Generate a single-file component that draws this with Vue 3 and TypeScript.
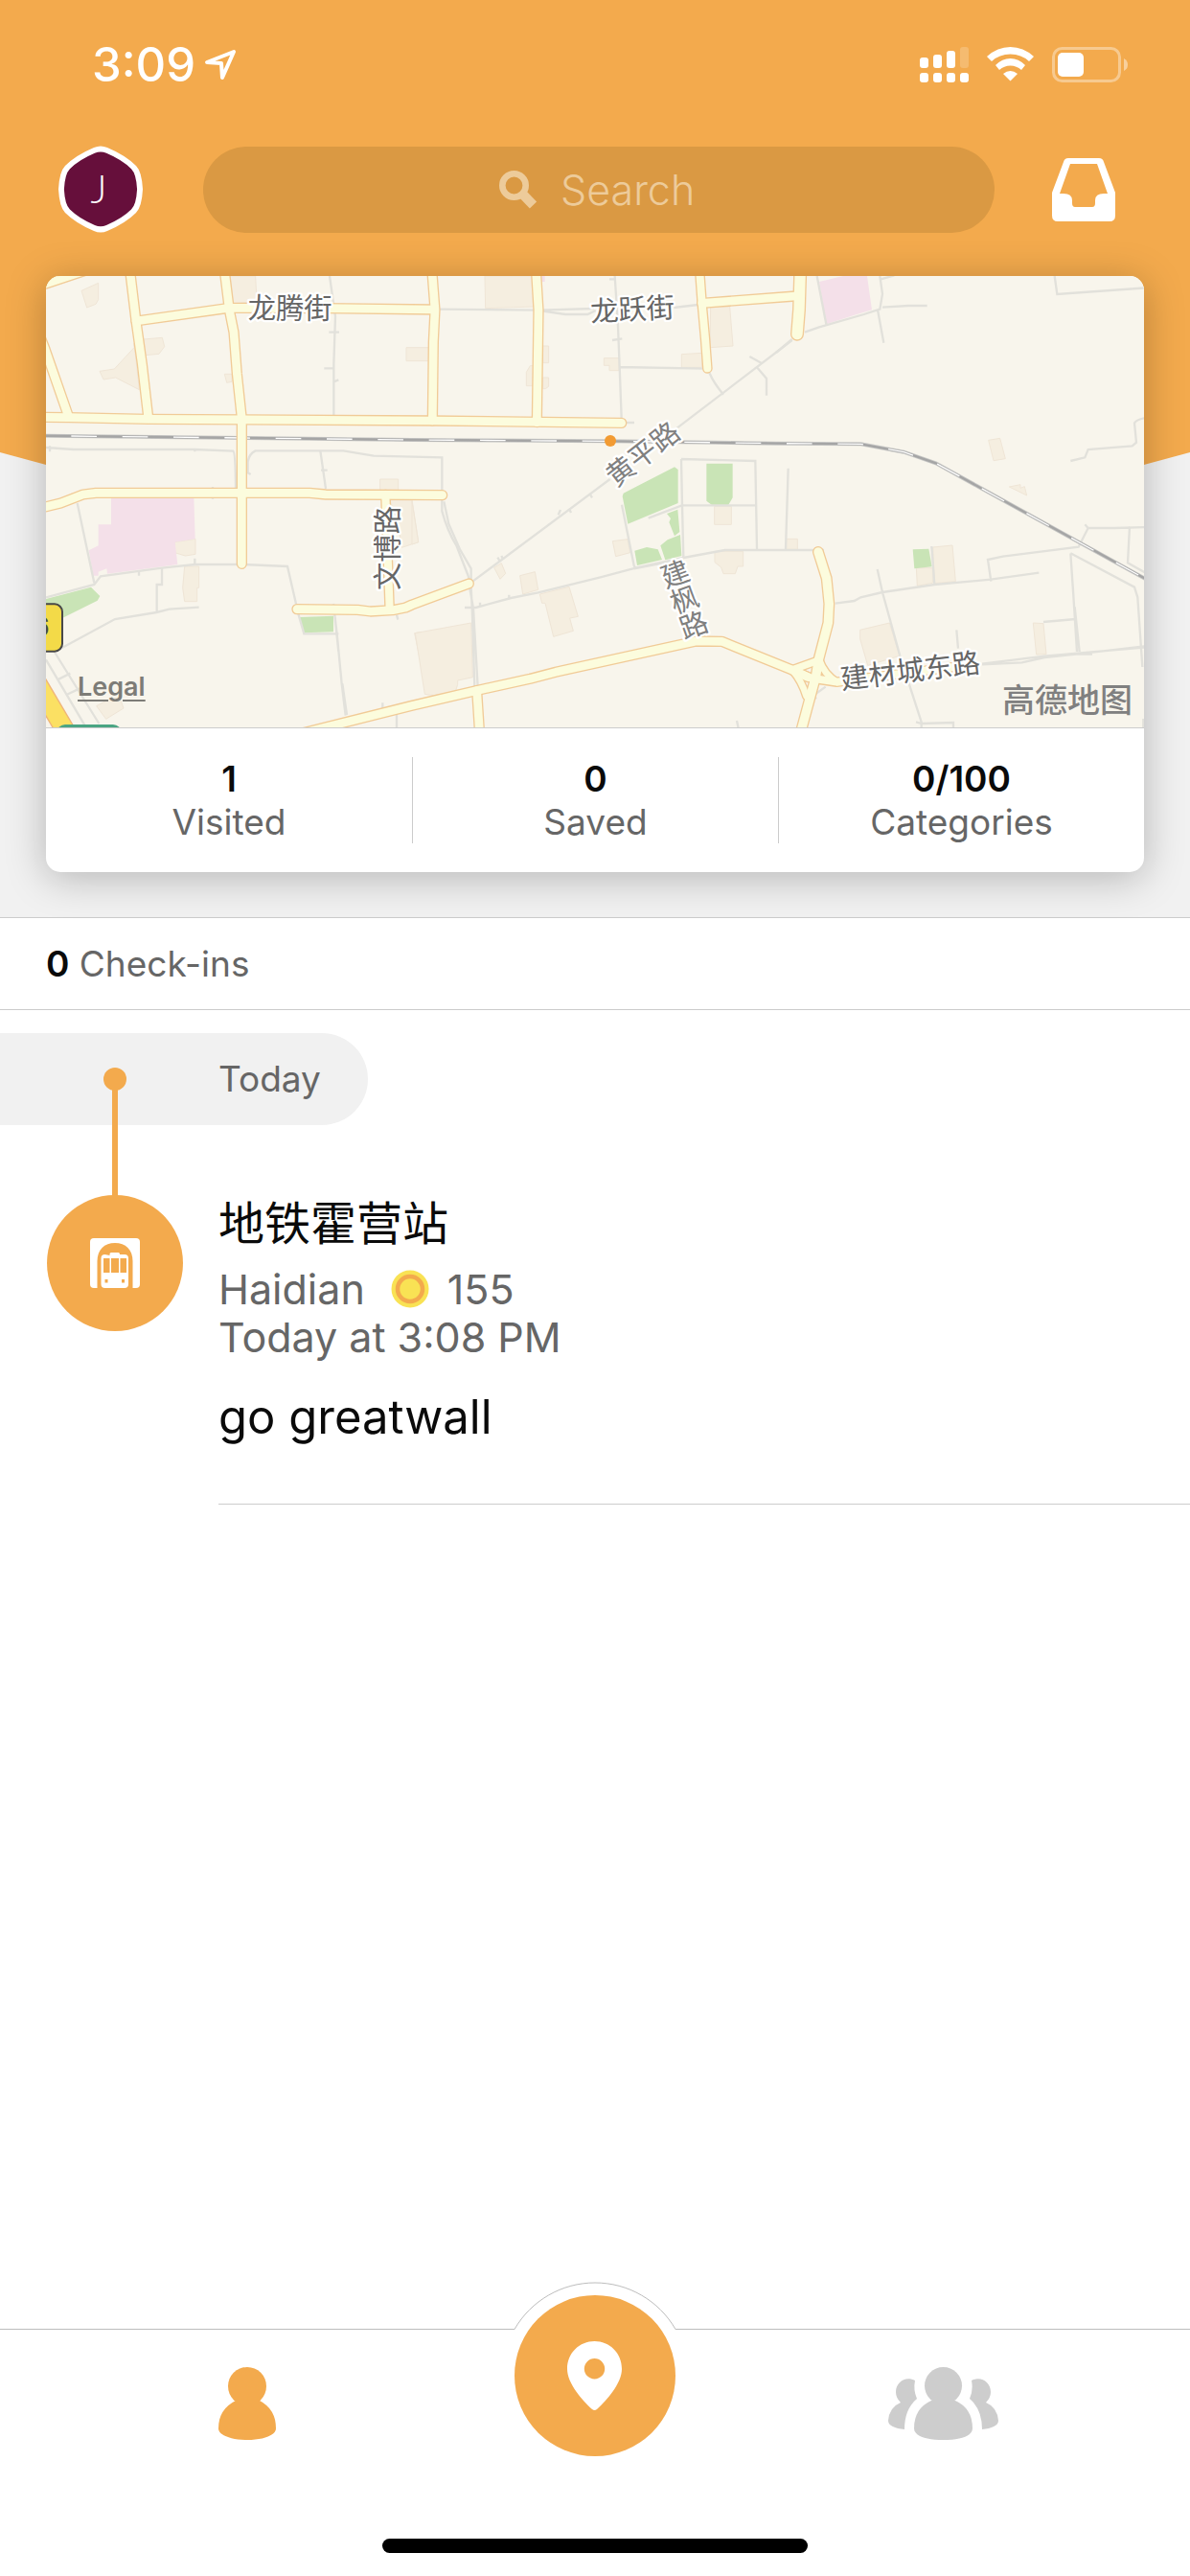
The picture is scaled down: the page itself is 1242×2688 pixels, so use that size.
<script setup lang="ts">
import { ref } from 'vue'

interface Shape { t: number; d: string; w?: number }
interface Stat { value: string; label: string }

const query = ref('')

const stats: Stat[] = [
  { value: '1', label: 'Visited' },
  { value: '0', label: 'Saved' },
  { value: '0/100', label: 'Categories' },
]

// Horizontal origin of the west, centre and east map tiles
const WEST = -24
const MID = 1146
const EAST = 2286

const roads: Shape[] = [
  { t: WEST, d: 'M0 56L150 6' },
  { t: WEST, d: 'M286 0L306 165L325 300L344 465' },
  { t: WEST, d: 'M582 0L598 130L612 200L622 330L637 470V925' },
  { t: WEST, d: 'M306 165L598 124L900 125L1235 129' },
  { t: WEST, d: 'M0 200L20 250L95 465' },
  { t: WEST, d: 'M0 466L95 467L345 472L1235 477L1826 484' },
  { t: WEST, d: 'M0 752L70 735L140 708L180 703H850L900 708L1265 710' },
  { t: WEST, d: 'M1087 708L1100 1068', w: 24 },
  { t: WEST, d: 'M810 1067L1000 1069L1040 1074L1110 1070L1150 1062L1170 1053L1348 987' },
  { t: MID, d: 'M62 0L72 130L67 230L64 477' },
  { t: MID, d: 'M388 0L396 130L391 482' },
  { t: MID, d: 'M900 0L908 110L918 220L925 313', w: 24 },
  { t: MID, d: 'M908 109L1200 87' },
  { t: EAST, d: 'M76 0L72 130L66 206', w: 34 },
  { t: MID, d: 'M-380 1464L0 1369L200 1322L370 1285L450 1264L890 1167L970 1168L1190 1257L1240 1280' },
  { t: MID, d: 'M203 1322L212 1460' },
  { t: EAST, d: 'M132 888L158 970L166 1050L163 1110L133 1225L125 1275L75 1460', w: 28 },
  { t: EAST, d: 'M50 1257L130 1228', w: 22 },
  { t: EAST, d: 'M50 1257Q80 1290 95 1340', w: 20 },
  { t: EAST, d: 'M50 1257L110 1283L190 1295L240 1288L420 1265L580 1245', w: 24 },
  { t: EAST, d: 'M135 1225Q150 1270 190 1295', w: 20 },
]

const lanes: Shape[] = [
  { t: WEST, d: 'M912 24L930 150L925 300V460M910 200H942M895 313H925M925 355L940 349' },
  { t: WEST, d: 'M24 561L110 567H490L610 572Q617 575 618 690M36 556V574M490 566V574M546 684V722' },
  { t: WEST, d: 'M665 645L656 640V605Q660 580 680 571H955L1050 587L1264 592V760Q1280 820 1310 870L1345 960L1352 980' },
  { t: WEST, d: 'M883 571L900 690M885 632H905' },
  { t: WEST, d: 'M122 735L175 985M24 1030L175 990L195 964L387 938L490 927H640L780 933L815 1085L832 1144H940' },
  { t: WEST, d: 'M387 938V990H371V1075M70 1190L240 1098L370 1077L410 1067L503 1061M490 908V928M315 950V962' },
  { t: WEST, d: 'M50 1200L190 1425M24 1225L145 1430M24 1390L50 1440M60 1288L100 1268M88 1335L130 1315' },
  { t: WEST, d: 'M924 1050L935 1144L950 1300L962 1400M928 1085L940 1200M952 1300L966 1398M1078 1360V1380M1122 1085L1126 1100M1122 1395V1437' },
  { t: MID, d: 'M85 128L400 131L570 126M410 134L480 144H550L575 132M820 123L895 114' },
  { t: MID, d: 'M635 24L645 180L650 309L656 470M627 225L658 220M650 309L915 314M618 34H636M668 483H696' },
  { t: MID, d: 'M1190 225L830 500M620 660L190 980M930 325Q945 360 975 395M1057 276L1096 298M1080 310L1110 345V398' },
  { t: MID, d: 'M458 772L465 756M492 752L498 765M558 708L564 718M268 905L276 918M280 900L286 912' },
  { t: MID, d: 'M100 730L115 800L150 880L185 940V1000L188 1060L196 1310M178 985L192 1065L206 1310M165 1062H200L310 1032L395 1015L590 967L700 938L850 906L980 882H1290' },
  { t: MID, d: 'M695 940L850 910M657 740L695 930L700 940M843 597L846 742L850 905M843 597L1075 603L1080 880M740 782L845 742H1080M1178 626L1170 880' },
  { t: MID, d: 'M304 1022V1034M213 1046V1060M1017 1416L1022 1440' },
  { t: EAST, d: 'M0 264L50 222M90 200L135 184L275 144L325 128L333 80L325 24M333 122L415 117H473M318 130L337 233M128 24L157 175M328 34L370 22' },
  { t: EAST, d: 'M872 24L880 81L1160 61M922 603L967 592L977 567L1115 556L1128 545L1122 484Q1130 472 1160 468' },
  { t: EAST, d: 'M1160 810L1060 813H977L967 802M977 813L947 872L710 902L663 912L673 980M1107 808L1101 922L1160 955' },
  { t: EAST, d: 'M922 892L1122 998L1132 1030L1147 1248M922 892L932 1040L942 1200M935 1060L950 1200M837 1107L938 1098' },
  { t: EAST, d: 'M645 1240L770 1234L840 1218L940 1208L1160 1182M645 1238L840 1214L1160 1186M940 1208L990 1208' },
  { t: EAST, d: 'M185 1049L245 1041L265 1030L333 1014L496 990L672 974L823 953M487 870L496 990M317 942L333 1014L387 1210L455 1420V1437M438 1420L455 1425L555 1422V1437M565 1132L570 1190' },
  { t: EAST, d: 'M155 1310L120 1335L125 1348M1150 1410V1437' },
]

const buildings: Shape[] = [
  { t: WEST, d: 'M135 70L188 46V98L180 112L152 123ZM330 222L388 217L395 245L378 268L335 272ZM192 322L238 315L300 248V235L316 380L242 342L204 348ZM600 24H680L684 104L610 110ZM583 331H606V355L590 358ZM1152 248H1225V290H1152ZM1070 660H1127V695H1070ZM1100 725H1170L1190 857L1138 874L1125 790ZM427 857L492 847V895L460 900L427 890ZM458 933H503V1000H497V1043H458L452 1000ZM182 1370L230 1345H255L267 1377L212 1411ZM1178 1142L1200 1138V1250Z' },
  { t: MID, d: 'M228 24H380V120L230 125ZM410 243H428V296H410ZM370 305H382V368H358V325ZM410 342H428V370L418 377H410ZM601 281H648V320H618V304H601ZM935 120H995L1005 243L933 248ZM844 269L908 265V310H844ZM0 730L20 857L0 864ZM628 854L675 848L683 890L638 902ZM257 937L280 923L293 955L276 973ZM338 962L385 950L395 1006L347 1020ZM400 1020L492 997L520 1090L494 1095L505 1135L443 1153L417 1048H407ZM10 1142L185 1110L190 1280L143 1290V1303L136 1325L68 1337L40 1333ZM947 745H1000V802H947ZM948 886H1037V933H1020L1012 956H975L968 936L948 920ZM1172 847H1207V880H1172Z' },
  { t: EAST, d: 'M665 538L701 532L718 596L681 602ZM730 684L765 677V688L778 683L785 711ZM491 873L552 867L562 980L496 986ZM439 938H490V985L442 994ZM263 1132L355 1110L387 1213L287 1243L263 1160ZM805 1110L837 1112L846 1208L815 1209Z' },
]

const campuses: Shape[] = [
  { t: WEST, d: 'M228 720H487L491 847L428 857L436 927L387 934L216 956L214 940L188 950V962H172L158 883L188 868V802H228Z' },
  { t: EAST, d: 'M135 42L210 24H285L300 130L250 145L157 175Z' },
  { t: MID, d: 'M405 24H416V42H405Z' },
]

const parks: Shape[] = [
  { t: WEST, d: 'M24 1035L165 998L193 1026L185 1040L75 1095L24 1080ZM817 1092L924 1088V1138L832 1141Z' },
  { t: MID, d: 'M662 704L822 622L833 630V735L676 800L659 714ZM922 611H1004V718L990 742H940L922 728ZM798 768L832 755L838 825L822 838L805 795L810 783ZM778 868L800 850L840 834L844 900L793 913ZM697 884L735 873L770 880L783 912L705 930Z' },
  { t: EAST, d: 'M428 880L478 878L488 934L433 940Z' },
]

const rail = 'M0 524L650 531L1170 537L1790 541L2310 548L2575 550L2710 575L2810 610L3490 985'
</script>

<template>
  <div class="screen">
    <header class="hero">
      <div class="status">
        <span class="clock">3:09</span>
        <svg class="locate" width="34" height="34" viewBox="-1 -1 34 34"><path d="M2 13 30 2 18 29 17 14Z" /></svg>
        <div class="signals">
          <svg width="51" height="37" viewBox="0 0 51 37" fill="#fff">
            <rect x="0" y="11" width="9" height="11" rx="3" /><rect x="14" y="8" width="9" height="14" rx="3" />
            <rect x="28" y="4" width="9" height="18" rx="3" /><rect x="42" y="0" width="9" height="22" rx="3" opacity=".2" />
            <rect v-for="x in [0, 14, 28, 42]" :key="x" :x="x" y="27" width="9" height="10" rx="3" />
          </svg>
          <svg width="49" height="36" viewBox="0 0 49 36" fill="#fff">
            <path d="M0 10Q11 0 24.500 0T49 10L44 15Q36 7.500 24.500 7.500T5 15Z" />
            <path d="M9 19Q16 12 24.500 12T40 19L36 24Q31 19.500 24.500 19.500T13 24Z" />
            <path d="M17 28Q24.500 22 32 28L24.500 35.500Z" />
          </svg>
          <svg width="80" height="37" viewBox="0 0 80 37">
            <rect x="1.500" y="1.500" width="69" height="34" rx="9" fill="none" stroke="#fff" stroke-width="3" opacity=".38" />
            <rect x="6" y="6" width="27" height="25" rx="5" fill="#fff" />
            <path d="M75 12Q79 14 79 18.500T75 25Z" fill="#fff" opacity=".45" />
          </svg>
        </div>
      </div>

      <div class="toolbar">
        <button class="plain" type="button" aria-label="Profile">
          <svg width="92" height="92" viewBox="0 0 92 92">
            <path fill="#fff" d="M38 2Q45-1 52 2Q71 10 82 21Q88 27 89 45.500Q88 64 82 70Q71 81 52 89Q45 92 38 89Q19 81 8 70Q2 64 1 45.500Q2 27 8 21Q19 10 38 2Z" />
            <path fill="#660f3b" transform="translate(6 6) scale(.866)" d="M38 2Q45-1 52 2Q71 10 82 21Q88 27 89 45.500Q88 64 82 70Q71 81 52 89Q45 92 38 89Q19 81 8 70Q2 64 1 45.500Q2 27 8 21Q19 10 38 2Z" />
            <text x="43" y="60" class="initial">J</text>
          </svg>
        </button>
        <label class="search">
          <svg width="40" height="40" viewBox="0 0 40 40" fill="none" stroke="currentColor">
            <circle cx="15.500" cy="15.500" r="12.200" stroke-width="6.600" /><path d="M23 23 35.500 36" stroke-width="10" />
          </svg>
          <input v-model="query" type="text" placeholder="Search" aria-label="Search" />
        </label>
        <button class="plain" type="button" aria-label="Inbox">
          <svg width="66" height="66" viewBox="0 0 66 66" fill="#fff" fill-rule="evenodd">
            <path d="M17 0H49Q53 0 54 4L66 36V60Q66 66 60 66H6Q0 66 0 60V36L12 4Q13 0 17 0ZM19 6H47L58 37H54Q45 37 45 44V47Q45 51 42 51H24Q21 51 21 47V44Q21 37 12 37H8Z" />
          </svg>
        </button>
      </div>

      <section class="card">
        <div class="map">
          <svg class="tiles" viewBox="0 0 3438 1413" preserveAspectRatio="xMidYMid slice">
            <rect width="3438" height="1413" fill="#f8f5ec" />
            <g transform="translate(0 -24)">
              <path v-for="(s, i) in buildings" :key="'b' + i" class="building" :transform="`translate(${s.t} 0)`" :d="s.d" />
              <path v-for="(s, i) in campuses" :key="'c' + i" fill="#f4e0e9" :transform="`translate(${s.t} 0)`" :d="s.d" />
              <path v-for="(s, i) in parks" :key="'p' + i" fill="#c9e4b6" :transform="`translate(${s.t} 0)`" :d="s.d" />
              <path v-for="(s, i) in lanes" :key="'l' + i" class="lane" :transform="`translate(${s.t} 0)`" :d="s.d" />
              <g transform="translate(-24 0)" fill="none">
                <path :d="rail" stroke="#c9c9c7" stroke-width="12" />
                <path :d="rail" stroke="#a5a5a5" stroke-width="7" />
                <path :d="rail" stroke="#fff" stroke-width="4" stroke-dasharray="80 80" stroke-dashoffset="-103" />
                <path d="M-20 1270L110 1490" stroke="#efb47a" stroke-width="62" />
                <path d="M-20 1270L110 1490" stroke="#fbe063" stroke-width="54" />
              </g>
              <path v-for="(s, i) in roads" :key="'k' + i" class="road" stroke="#f1cb97" :stroke-width="(s.w ?? 26) + 8" :transform="`translate(${s.t} 0)`" :d="s.d" />
              <path v-for="(s, i) in roads" :key="'r' + i" class="road" stroke="#fcfcdd" :stroke-width="s.w ?? 26" :transform="`translate(${s.t} 0)`" :d="s.d" />
              <rect x="-100" y="1051" width="151" height="148" rx="24" fill="#f3da48" stroke="#484848" stroke-width="6" />
              <text class="shield" x="10" y="1152">6</text>
              <rect x="34" y="1428" width="202" height="80" rx="26" fill="#4aa583" />
              <circle cx="1767" cy="540" r="18" fill="#f29b33" />
              <text class="street" x="764" y="155">龙腾街</text>
              <text class="street" transform="translate(1838 160) rotate(-3)">龙跃街</text>
              <text class="street faint" transform="translate(1888 606) rotate(-38)">黄平路</text>
              <text class="street" transform="translate(1102 876) rotate(-90)">文博路</text>
              <text class="street faint" transform="translate(1981 987) rotate(-20)">
                <tspan x="0" dy="0">建</tspan><tspan x="0" dy="85">枫</tspan><tspan x="0" dy="85">路</tspan>
              </text>
              <text class="street" transform="translate(2710 1291) rotate(-7)">建材城东路</text>
            </g>
          </svg>
          <a class="legal" href="#legal">Legal</a>
          <span class="provider">高德地图</span>
        </div>
        <div class="stats">
          <div v-for="s in stats" :key="s.label" class="stat">
            <strong>{{ s.value }}</strong>
            <span>{{ s.label }}</span>
          </div>
        </div>
      </section>
    </header>

    <main>
      <div class="count"><strong>0</strong> Check-ins</div>
      <section class="timeline">
        <h2 class="day"><i class="stem"></i>Today</h2>
        <article class="entry">
          <span class="venue">
            <svg width="52" height="52" viewBox="0 0 52 52">
              <rect width="52" height="52" rx="4" fill="#fff" />
              <path d="M7.500 52V24C7.500 12 15 5 26 5S44.500 12 44.500 24V52Z" fill="#f3aa4d" />
              <path d="M20.500 18V16.500Q20.500 15 22 15H29.500Q31 15 31 16.500V17H36Q40 17 40 21V48Q40 52 36 52H15.500Q11.500 52 11.500 48V21Q11.500 17 15.500 17Z" fill="#fff" />
              <path d="M14 21H20.500V36H14ZM22 21H30V36H22ZM31.500 21H38V36H31.500ZM15.500 43H18.500V46.500H15.500ZM33 43H36V46.500H33Z" fill="#f3aa4d" />
            </svg>
          </span>
          <div class="details">
            <h3>地铁霍营站</h3>
            <p class="meta">
              Haidian
              <svg class="coin" width="40" height="40" viewBox="0 0 40 40"><circle cx="20" cy="20" r="19.500" fill="#f9e254" /><circle cx="20" cy="20" r="13" fill="none" stroke="#f3aa4d" stroke-width="4.500" /></svg>
              155
            </p>
            <p class="meta">Today at 3:08 PM</p>
            <p class="note">go greatwall</p>
          </div>
        </article>
      </section>
    </main>

    <nav class="tabs">
      <div class="row">
        <button class="plain tab" type="button" aria-label="Me">
          <svg width="60" height="76" viewBox="0 0 60 76" fill="#f3aa4d">
            <circle cx="30" cy="20" r="20" /><path d="M18 35H43Q60 44 60 64C60 71 47 76 30 76S0 71 0 64Q0 44 18 35Z" />
          </svg>
        </button>
        <div class="middle">
          <svg class="bump" width="168" height="51" viewBox="0 0 168 51"><path d="M0 51V49.500A97 97 0 0 1 168 49.500V51" fill="#fff" /><path d="M0 49.500A97 97 0 0 1 168 49.500" fill="none" stroke="#bdbdbd" /></svg>
          <button class="checkin" type="button" aria-label="Check in">
            <svg width="57" height="72" viewBox="0 0 57 72" fill="#fff" fill-rule="evenodd">
              <path d="M28.500 0C44 0 57 12 57 29C57 44 41 62 31 71Q28.500 73 26 71C16 62 0 44 0 29C0 12 13 0 28.500 0ZM28.500 18A10.700 10.700 0 1 0 28.500 39.400A10.700 10.700 0 1 0 28.500 18Z" />
            </svg>
          </button>
        </div>
        <button class="plain tab" type="button" aria-label="Friends">
          <svg width="115" height="76" viewBox="0 0 115 76" fill="#cdcdcd">
            <circle cx="57.500" cy="19.500" r="19.500" /><path d="M45 35H70Q88 43 88 64C88 72 75 76 57.500 76S27 72 27 64Q27 43 45 35Z" />
            <path d="M28 14Q26 24 30 33Q17 44 17 65C7 64 0 61 0 56Q1 42 13 37Q8 32 8 26C8 16 18 9 28 14Z" />
            <path transform="translate(115 0) scale(-1 1)" d="M28 14Q26 24 30 33Q17 44 17 65C7 64 0 61 0 56Q1 42 13 37Q8 32 8 26C8 16 18 9 28 14Z" />
          </svg>
        </button>
      </div>
      <div class="home"></div>
    </nav>
  </div>
</template>

<style>
body { margin: 0; background: #fff; }
</style>

<style scoped>
* { box-sizing: border-box; }
svg { display: block; flex: none; }
h2, h3, p { margin: 0; font-weight: inherit; }
.plain { padding: 0; border: 0; background: none; cursor: pointer; }

.screen {
  display: flex;
  flex-direction: column;
  min-height: 100vh;
  background: #fff;
  color: #666;
  font: 400 37px/45px Inter, "Noto Sans CJK SC", sans-serif;
}

.hero { position: relative; padding-bottom: 47px; background: #f1f1f1; }
.hero::before {
  content: "";
  position: absolute;
  inset: 0 0 auto;
  height: 640px;
  background: #f3aa4d;
  clip-path: polygon(0 0, 100% 0, 100% 472px, 50% 640px, 0 472px);
}
.status, .toolbar, .card { position: relative; }
.status { display: flex; align-items: center; height: 135px; padding: 0 64px 0 96px; color: #fff; }
.clock { font-size: 49px; font-weight: 500; }
.locate { margin-left: 9px; fill: none; stroke: #fff; stroke-width: 4; stroke-linejoin: round; }
.signals { display: flex; gap: 19px; margin-left: auto; }

.toolbar { display: flex; align-items: center; gap: 60px; padding: 17px 78px 0 60px; }
.initial { fill: #fff; font-family: Lato, sans-serif; font-size: 41px; font-weight: 300; text-anchor: middle; }
.search {
  display: flex;
  flex: 1;
  align-items: center;
  justify-content: center;
  gap: 24px;
  height: 90px;
  border-radius: 45px;
  background: #da9943;
  color: #edcb9a;
}
.search input {
  width: 144px;
  padding: 0;
  border: 0;
  outline: 0;
  background: none;
  color: #fff;
  font: 300 43px/50px Inter, sans-serif;
}
.search input::placeholder { color: #edcb9a; opacity: 1; }

.card {
  margin: 44px 48px 0;
  border-radius: 15px;
  background: #fff;
  box-shadow: 0 6px 42px rgba(0, 0, 0, .25);
}
.map { position: relative; overflow: hidden; border-bottom: 1px solid #ccc; border-radius: 15px 15px 0 0; }
.tiles { width: 100%; height: auto; }
.building { fill: #f5eee0; stroke: #efe5d6; stroke-width: 3; }
.lane { fill: none; stroke: #e2e1db; stroke-width: 7; }
.road { fill: none; stroke-linecap: round; stroke-linejoin: round; }
.street {
  fill: #666;
  stroke: #fff;
  stroke-width: 14;
  stroke-linejoin: round;
  paint-order: stroke;
  text-anchor: middle;
  font-family: "Noto Sans CJK SC", sans-serif;
  font-size: 88px;
  font-weight: 400;
}
.faint { fill: #808080; }
.shield { fill: #484848; font-size: 84px; font-weight: 700; text-anchor: end; }
.legal { position: absolute; left: 33px; bottom: 20px; color: #7d7c77; font-size: 27px; font-weight: 600; text-underline-offset: 4px; }
.provider { position: absolute; right: 12px; bottom: 6px; color: #808080; font-size: 34px; font-weight: 500; }

.stats { display: grid; grid-template-columns: repeat(3, 1fr); padding: 30px 0; }
.stat { display: flex; flex-direction: column; align-items: center; }
.stat + .stat { border-left: 1px solid #ccc; }
.stat strong, .count strong { color: #0a0a0a; font-weight: 600; }

.count { padding: 25px 48px; border: solid #ccc; border-width: 1px 0; }
.timeline { padding-top: 24px; }
.day {
  position: relative;
  width: 384px;
  padding: 25px 0 26px 228px;
  border-radius: 0 48px 48px 0;
  background: #f1f1f1;
  font-size: 37px;
}
.stem { position: absolute; z-index: 1; top: 48px; left: 117px; width: 6px; height: 124px; background: #f3aa4d; }
.stem::before { content: ""; position: absolute; top: -12px; left: -9px; width: 24px; height: 24px; border-radius: 50%; background: #f3aa4d; }
.entry { display: flex; gap: 37px; margin-top: 73px; padding-left: 49px; }
.venue { display: grid; flex: none; place-items: center; width: 142px; height: 142px; border-radius: 50%; background: #f3aa4d; }
.details { flex: 1; padding-bottom: 60px; border-bottom: 1px solid #ccc; }
.details h3, .note { color: #0a0a0a; line-height: 60px; }
.details h3 { font-size: 48px; }
.meta { display: flex; align-items: center; gap: 19px; font-size: 43px; line-height: 50px; }
.coin { margin-left: 8px; }
.details h3 + .meta { margin-top: 13px; }
.note { margin-top: 29px; font-size: 49px; }

.tabs { margin-top: auto; padding-bottom: 24px; border-top: 1px solid #bdbdbd; background: #fff; }
.row { display: grid; grid-template-columns: repeat(3, 1fr); height: 218px; padding: 0 76px; }
.tab { display: flex; justify-content: center; align-items: flex-start; padding-top: 39px; }
.middle { position: relative; display: flex; justify-content: center; align-items: flex-start; }
.bump { position: absolute; top: -50px; left: calc(50% - 84px); }
.checkin {
  position: relative;
  display: grid;
  place-items: center;
  width: 168px;
  height: 168px;
  margin-top: -36px;
  padding: 0;
  border: 0;
  border-radius: 50%;
  background: #f3aa4d;
}
.home { width: 444px; height: 15px; margin: 0 auto; border-radius: 8px; background: #000; }
</style>
